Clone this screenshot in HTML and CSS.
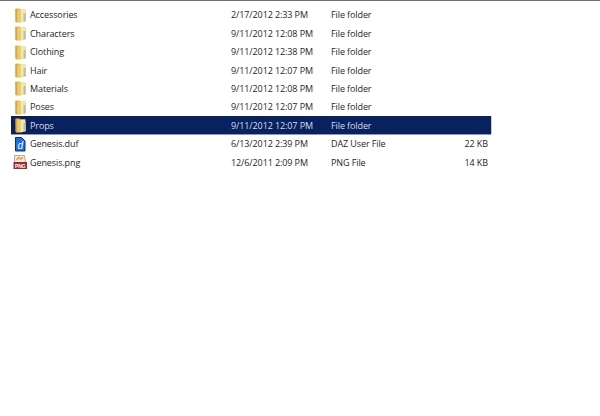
FILE: index.html
```html
<!DOCTYPE html>
<html>
<head>
<meta charset="utf-8">
<title>Genesis</title>
<link rel="stylesheet" href="styles.css">
</head>
<body>
<svg width="0" height="0" class="defs">
<symbol id="folder" viewBox="0 0 16 16">
<path d="M3.500 1.500h4l1 1h5l.5 11.500-5.500 1.500H4z" fill="#e6bb50"/>
<path d="M8.500 2.500h4.500l.5 11.500-5 1.500z" fill="#f8e8a4"/>
<path d="M11.500 6h2v8.500h-2z" fill="#a4c4c8"/>
<path d="M4 2v13" stroke="#c89c38" stroke-width="1.200" fill="none"/>
<path d="M5.500 3h3v12h-3z" fill="#eccb6c"/>
</symbol>
</svg>
<div class="list">
<div class="row"><svg class="ico"><use href="#folder"/></svg><span class="name">Accessories</span><span class="date">2/17/2012 2:33 PM</span><span class="type">File folder</span><span class="size"></span></div>
<div class="row"><svg class="ico"><use href="#folder"/></svg><span class="name">Characters</span><span class="date">9/11/2012 12:08 PM</span><span class="type">File folder</span><span class="size"></span></div>
<div class="row"><svg class="ico"><use href="#folder"/></svg><span class="name">Clothing</span><span class="date">9/11/2012 12:38 PM</span><span class="type">File folder</span><span class="size"></span></div>
<div class="row"><svg class="ico"><use href="#folder"/></svg><span class="name">Hair</span><span class="date">9/11/2012 12:07 PM</span><span class="type">File folder</span><span class="size"></span></div>
<div class="row"><svg class="ico"><use href="#folder"/></svg><span class="name">Materials</span><span class="date">9/11/2012 12:08 PM</span><span class="type">File folder</span><span class="size"></span></div>
<div class="row"><svg class="ico"><use href="#folder"/></svg><span class="name">Poses</span><span class="date">9/11/2012 12:07 PM</span><span class="type">File folder</span><span class="size"></span></div>
<div class="row selected"><svg class="ico"><use href="#folder"/></svg><span class="name">Props</span><span class="date">9/11/2012 12:07 PM</span><span class="type">File folder</span><span class="size"></span></div>
<div class="row"><svg class="ico" viewBox="0 0 16 16"><path d="M3.500 1.500h6l3.500 3.500v10H3.500z" fill="#1a6ee8" stroke="#0c2c78"/><text x="8.200" y="13" class="duf-d">d</text></svg><span class="name">Genesis.duf</span><span class="date">6/13/2012 2:39 PM</span><span class="type">DAZ User File</span><span class="size">22 KB</span></div>
<div class="row"><svg class="ico" viewBox="0 0 16 16"><path d="M2.500 1.500h10l1 7h-11z" fill="#f0ebdc" stroke="#b4ac9c"/><path d="M4.500 6l2-2.500 2 1.500 2.500-1.500" fill="none" stroke="#e0a040" stroke-width="1.500"/><path d="M1.500 8h13.500v7H1.500z" fill="#a02a2c"/><text x="8.200" y="13.500" class="png-t">PNG</text></svg><span class="name">Genesis.png</span><span class="date">12/6/2011 2:09 PM</span><span class="type">PNG File</span><span class="size">14 KB</span></div>
</div>
</body>
</html>
```
FILE: styles.css
```css
html, body {
  margin: 0;
  padding: 0;
  background: #fff;
}
body {
  height: 416px;
  overflow: hidden;
  border-top: 1px solid #6e6e6e;
  box-sizing: border-box;
  font-family: "Open Sans", "Liberation Sans", sans-serif;
  font-size: 9px;
  letter-spacing: -0.1px;
  color: #262626;
}
.defs {
  position: absolute;
}
.list {
  display: flex;
  flex-direction: column;
  width: 480px;
  margin-left: 11px;
  padding-top: 4.700px;
}
.row {
  display: flex;
  align-items: center;
  height: 18.400px;
  white-space: nowrap;
}
.selected {
  background: #08215f;
  color: #d8dde8;
  box-shadow: 0 1px 0 #8c9ab8, 1px 0 0 #c4cbdc;
}
.ico {
  width: 16px;
  height: 16px;
  margin-left: 1px;
  flex: none;
}
.name {
  width: 201px;
  margin-left: 2px;
}
.date {
  width: 100px;
}
.type {
  width: 100px;
}
.size {
  width: 57px;
  text-align: right;
}
.duf-d {
  font-family: "Liberation Sans", sans-serif;
  font-size: 10px;
  font-style: italic;
  fill: #fff;
  text-anchor: middle;
}
.png-t {
  font-family: "Liberation Sans", sans-serif;
  font-size: 5px;
  font-weight: bold;
  fill: #fff;
  text-anchor: middle;
}
```
